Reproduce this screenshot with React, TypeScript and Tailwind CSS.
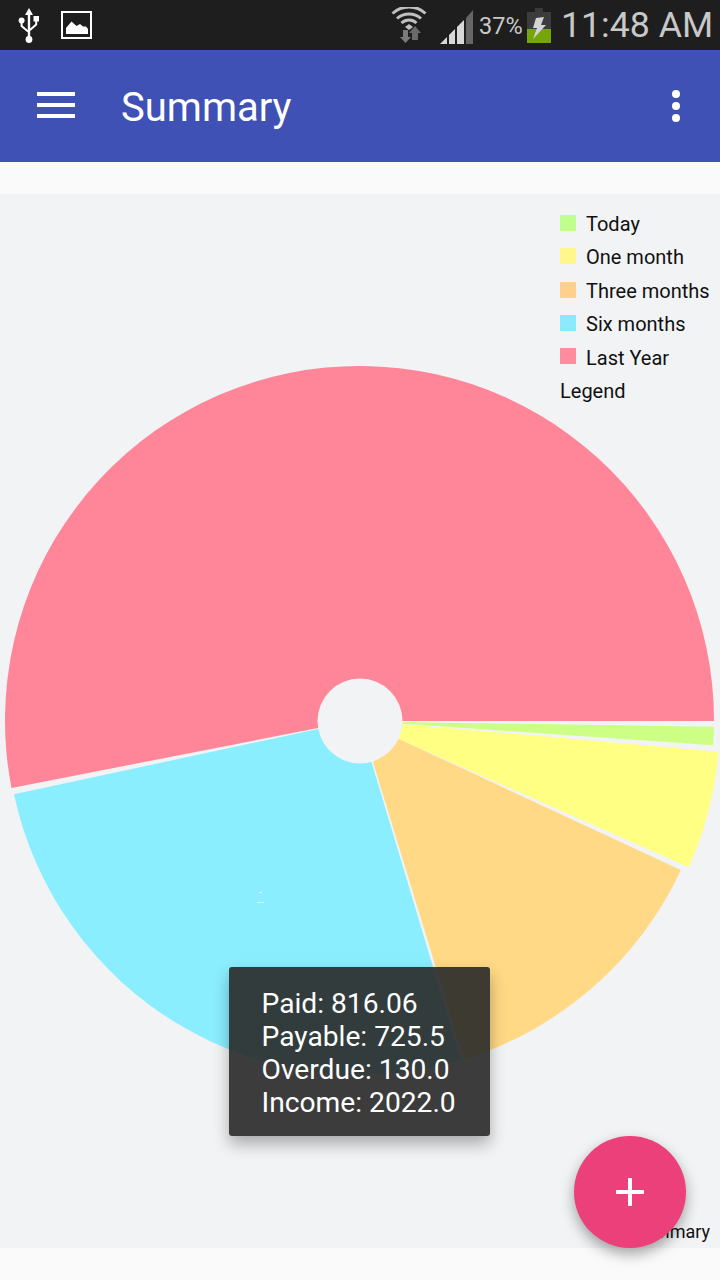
const legend = [
  { label: "Today", swatch: "bg-[#c0ff8c]" },
  { label: "One month", swatch: "bg-[#fff78c]" },
  { label: "Three months", swatch: "bg-[#ffd08c]" },
  { label: "Six months", swatch: "bg-[#8ceaff]" },
  { label: "Last Year", swatch: "bg-[#ff8c9d]" },
];

function UsbIcon() {
  return (
    <svg width="22" height="36" viewBox="0 0 22 36" fill="none">
      <path d="M11 0 L15 7 H12.2 V29 H9.8 V7 H7 Z" fill="#fff" />
      <circle cx="11" cy="31.5" r="3.4" fill="#fff" />
      <circle cx="3.6" cy="12.5" r="3" fill="#fff" />
      <rect x="15.5" y="8" width="5.5" height="5.5" fill="#fff" />
      <path d="M3.6 14 V18 L10 23.5 M18.2 13 V16.5 L12 22" stroke="#fff" strokeWidth="2" />
    </svg>
  );
}

function ImageIcon() {
  return (
    <svg width="31" height="28" viewBox="0 0 31 28" fill="none">
      <rect x="1" y="1" width="29" height="26" stroke="#fff" strokeWidth="2" />
      <path d="M5 23 V17 L10.5 10.5 L15.5 15 L19 13 L22 15.5 L25 15.5 L27 18 V23 Z" fill="#fff" />
    </svg>
  );
}

function WifiIcon() {
  return (
    <svg width="36" height="36" viewBox="0 0 36 36" fill="none">
      <path d="M1.5 6.5 A24 24 0 0 1 34.5 6.5" stroke="#c0c0c0" strokeWidth="3" />
      <path d="M6 11.5 A18 18 0 0 1 30 11.5" stroke="#c0c0c0" strokeWidth="3" />
      <path d="M10.5 16 A11 11 0 0 1 25.5 16" stroke="#c0c0c0" strokeWidth="3" />
      <path d="M14 20 L18 17 L22 20 L18 23 Z" fill="#c0c0c0" />
      <path d="M12 23 H17 V30 H20 L14.5 36 L9 30 H12 Z" fill="#7a7a7a" />
      <path d="M24 19 L30 26 H27 V33 H21 V26 H18 Z" fill="#6a6a6a" />
    </svg>
  );
}

function SignalIcon() {
  return (
    <svg width="33" height="34" viewBox="0 0 33 34">
      <path d="M0 34 L7 27 V34 Z" fill="#d8d8d8" />
      <path d="M9 25 L15 19 V34 H9 Z" fill="#d8d8d8" />
      <path d="M17 17 L24 10 V34 H17 Z" fill="#d8d8d8" />
      <path d="M26 8 L33 0 V34 H26 Z" fill="#666" />
    </svg>
  );
}

function BatteryIcon() {
  return (
    <svg width="24" height="35" viewBox="0 0 24 35">
      <rect x="8" y="0" width="8" height="4" fill="#3a3a3a" />
      <rect x="0" y="4" width="24" height="17" fill="#3c3c3c" />
      <rect x="0" y="21" width="24" height="14" fill="#76a50a" />
      <path d="M9 10 L17 9 L14 17 H19 L6 31 L10 20 H6 Z" fill="#d4d4d4" />
    </svg>
  );
}

function PieChart() {
  return (
    <svg className="block" width="720" height="1054" viewBox="0 194 720 1054">
      <path d="M354 721 H714 A354.5 354.5 0 1 0 11.5 788 L318 728 Z" fill="#ff8698" />
      <path d="M402 722 L713.9 726.7 A354.5 354.5 0 0 1 713.1 745.3 L402 723.6 Z" fill="#ceff85" />
      <path d="M401 724 L718.5 751.7 A360 360 0 0 1 688.7 867.3 L399 739 Z" fill="#ffff84" />
      <path d="M399 739 L680.9 870 A354.5 354.5 0 0 1 464 1059.2 L373 762 Z" fill="#ffd985" />
      <path d="M318 729 L14 794.3 A354.5 354.5 0 0 0 461 1060.2 L371.5 762 Z" fill="#8aeeff" />
      <circle cx="360" cy="721" r="42.5" fill="#f2f3f5" />
      <path d="M259 892.5 H262 M257 902.5 H264" stroke="#d6f8ff" strokeWidth="1" />
    </svg>
  );
}

export default function App() {
  return (
    <div className="flex h-[1280px] w-[720px] flex-col overflow-hidden bg-[#fafafa] font-['Roboto',sans-serif]">
      <div className="flex h-[50px] shrink-0 items-center bg-[#1e1e1e]">
        <div className="ml-[18px] mb-[-1px]">
          <UsbIcon />
        </div>
        <div className="ml-[21px]">
          <ImageIcon />
        </div>
        <div className="ml-[299px]">
          <WifiIcon />
        </div>
        <div className="ml-[13px] mt-[3px]">
          <SignalIcon />
        </div>
        <span className="ml-[6px] mt-[3px] w-[43px] text-[23.5px] leading-none text-[#c8c8c8]">37%</span>
        <div className="ml-[5px] mt-[1px]">
          <BatteryIcon />
        </div>
        <span className="ml-[10px] mt-[1px] whitespace-nowrap text-[35.7px] leading-none text-[#c8c8c8]">11:48 AM</span>
      </div>

      <div className="flex h-[112px] shrink-0 items-center bg-[#3f51b5] pl-[37px] pr-10">
        <div className="-mt-[2px] flex w-[38px] flex-col gap-[7px]">
          <div className="h-1 bg-white" />
          <div className="h-1 bg-white" />
          <div className="h-1 bg-white" />
        </div>
        <h1 className="ml-[46px] mt-1 flex-1 text-[40px] leading-none text-white">Summary</h1>
        <div className="flex flex-col gap-1">
          <div className="size-2 rounded-full bg-white" />
          <div className="size-2 rounded-full bg-white" />
          <div className="size-2 rounded-full bg-white" />
        </div>
      </div>

      <div className="h-8 shrink-0" />

      <div className="relative h-[1054px] shrink-0 bg-[#f2f3f5]">
        <PieChart />

        <div className="absolute left-[560px] top-[14px] text-[20px] leading-[33.4px] text-[#111]">
          {legend.map((item) => (
            <div key={item.label} className="flex items-center gap-[10px] whitespace-nowrap">
              <div className={`mb-1 size-4 ${item.swatch}`} />
              <span>{item.label}</span>
            </div>
          ))}
          <div>Legend</div>
        </div>

        <span className="absolute bottom-[4px] right-[10px] text-[18px] leading-6 text-[#111]">Summary</span>

        <div className="absolute left-[229px] top-[773px] h-[169px] w-[261px] rounded-[3px] bg-[#282828]/90 pl-[32.5px] pt-5 text-[28.2px] leading-[33px] text-white shadow-[0_8px_16px_rgba(0,0,0,0.3)]">
          <div>Paid: 816.06</div>
          <div>Payable: 725.5</div>
          <div>Overdue: 130.0</div>
          <div>Income: 2022.0</div>
        </div>

        <button className="absolute left-[574px] top-[942px] flex size-[112px] items-center justify-center rounded-full bg-[#ec407a] shadow-[0_6px_14px_rgba(0,0,0,0.35)]">
          <svg width="28" height="28" viewBox="0 0 28 28">
            <path d="M12 0 H16 V12 H28 V16 H16 V28 H12 V16 H0 V12 H12 Z" fill="#fff" />
          </svg>
        </button>
      </div>
    </div>
  );
}
